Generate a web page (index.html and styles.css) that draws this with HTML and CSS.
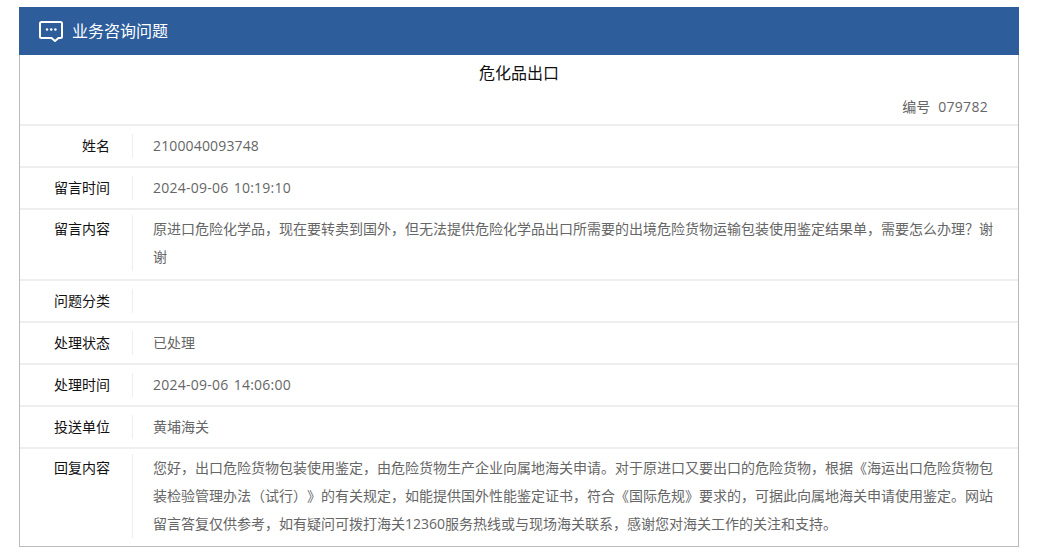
FILE: index.html
```html
<!DOCTYPE html>
<html lang="zh-CN">
<head>
<meta charset="utf-8">
<title>业务咨询问题</title>
<link rel="stylesheet" href="styles.css">
</head>
<body>
<div class="panel">
  <header class="panel-head">
    <svg class="head-icon" width="24" height="21" viewBox="0 0 24 21" fill="none">
      <path d="M2.5 1H21.5A1.5 1.5 0 0 1 23 2.5V15.5A1.5 1.5 0 0 1 21.5 17H19.5L16 20L12.5 17H2.5A1.5 1.5 0 0 1 1 15.5V2.5A1.5 1.5 0 0 1 2.5 1Z" stroke="#fff" stroke-width="2"/>
      <circle cx="8" cy="8.5" r="1.25" fill="#fff"/>
      <circle cx="12.2" cy="8.5" r="1.25" fill="#fff"/>
      <circle cx="16.4" cy="8.5" r="1.25" fill="#fff"/>
    </svg>
    <span class="head-title">业务咨询问题</span>
  </header>
  <div class="panel-body">
    <h1 class="title">危化品出口</h1>
    <div class="serial">编号<span class="serial-no">079782</span></div>
    <div class="row"><div class="label">姓名</div><div class="value"><span class="num">2100040093748</span></div></div>
    <div class="row"><div class="label">留言时间</div><div class="value"><span class="time">2024-09-06 10:19:10</span></div></div>
    <div class="row row-multi"><div class="label">留言内容</div><div class="value">原进口危险化学品，现在要转卖到国外，但无法提供危险化学品出口所需要的出境危险货物运输包装使用鉴定结果单，需要怎么办理？谢谢</div></div>
    <div class="row"><div class="label">问题分类</div><div class="value"></div></div>
    <div class="row"><div class="label">处理状态</div><div class="value">已处理</div></div>
    <div class="row"><div class="label">处理时间</div><div class="value"><span class="time">2024-09-06 14:06:00</span></div></div>
    <div class="row"><div class="label">投送单位</div><div class="value">黄埔海关</div></div>
    <div class="row row-multi"><div class="label">回复内容</div><div class="value">您好，出口危险货物包装使用鉴定，由危险货物生产企业向属地海关申请。对于原进口又要出口的危险货物，根据《海运出口危险货物包装检验管理办法（试行）》的有关规定，如能提供国外性能鉴定证书，符合《国际危规》要求的，可据此向属地海关申请使用鉴定。网站留言答复仅供参考，如有疑问可拨打海关12360服务热线或与现场海关联系，感谢您对海关工作的关注和支持。</div></div>
  </div>
</div>
</body>
</html>
```
FILE: styles.css
```css
* { box-sizing: border-box; }
html, body { margin: 0; padding: 0; background: #fff; }
body {
  padding: 7px 21px 0 19px;
  font-family: "Open Sans", "Noto Sans CJK SC", sans-serif;
  font-size: 14px;
  color: #666;
  text-spacing-trim: space-all;
}
.panel { width: 1000px; }
.panel-head {
  height: 48px;
  background: #2d5d9b;
  display: flex;
  align-items: center;
  padding-left: 20px;
  gap: 9px;
  color: #fff;
}
.head-icon { display: block; margin-top: 1px; }
.head-title { font-size: 16px; line-height: 24px; margin-top: -1px; }
.panel-body {
  border: 1px solid #bbb;
  border-top: 0;
}
.title {
  margin: 0;
  padding-top: 6px;
  height: 40px;
  line-height: 24px;
  font-size: 16px;
  font-weight: 400;
  color: #111;
  text-align: center;
}
.serial {
  height: 29px;
  line-height: 24px;
  padding-right: 30px;
  text-align: right;
  color: #666;
}
.serial-no { margin-left: 8px; letter-spacing: .3px; }
.num { letter-spacing: .15px; }
.time { letter-spacing: .25px; word-spacing: 1.2px; }
.row {
  display: flex;
  align-items: stretch;
  border-top: 2px solid #eee;
  padding: 8px 0;
  line-height: 24px;
}
.row-multi {
  padding: 5px 0 8px;
  line-height: 28px;
}
.label {
  width: 112px;
  padding-right: 22px;
  text-align: right;
  color: #111;
  flex: none;
}
.value {
  flex: 1;
  min-height: 24px;
  padding: 0 20px;
  border-left: 1px solid #eee;
  color: #666;
}
```
